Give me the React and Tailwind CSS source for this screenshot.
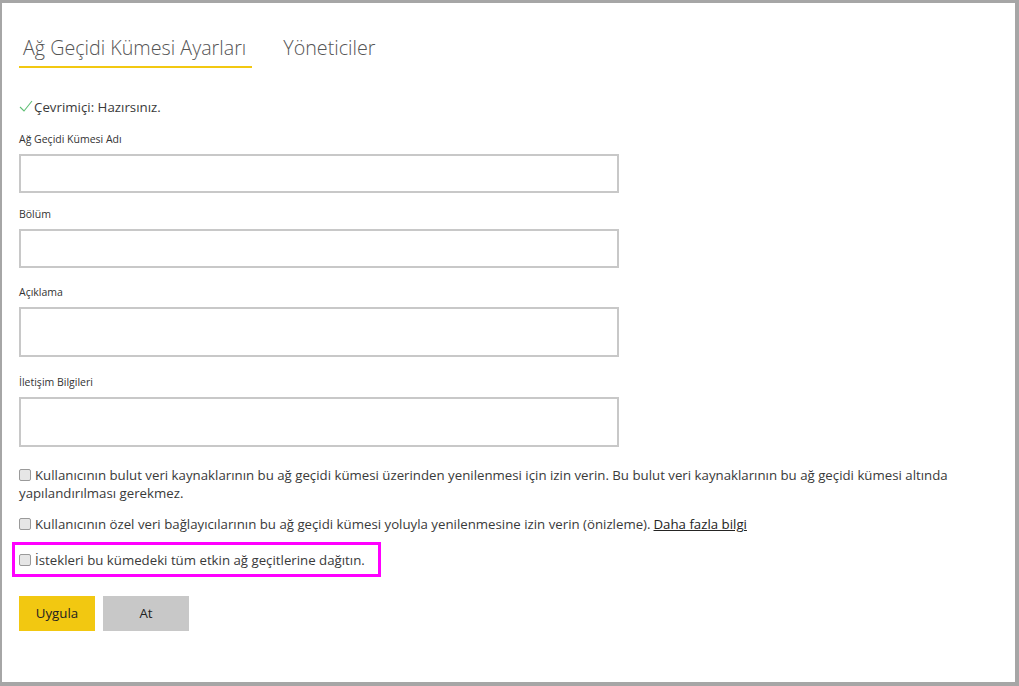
import { useState } from 'react';

const fields = [
  { label: 'Ağ Geçidi Kümesi Adı', h: 'h-[39px]', top: 'mt-[13px]' },
  { label: 'Bölüm', h: 'h-[39px]', top: 'mt-[13px]' },
  { label: 'Açıklama', h: 'h-[50px]', top: 'mt-[16px]' },
  { label: 'İletişim Bilgileri', h: 'h-[50px]', top: 'mt-[17px]' },
];

const Box = ({ checked, onChange }) => (
  <input
    type="checkbox"
    checked={checked}
    onChange={onChange}
    className="appearance-none w-[12px] h-[12px] shrink-0 rounded-[2px] border border-[#9a9a9a] bg-[#e6e6e6] mr-[4px] mt-[3px] checked:bg-[#f2c811]"
  />
);

const App = () => {
  const [tab, setTab] = useState(0);
  const [checks, setChecks] = useState([false, false, false]);

  const toggle = (i) => setChecks(checks.map((c, idx) => (idx === i ? !c : c)));

  return (
    <div
      className="w-[1019px] h-[686px] bg-white border-[#a6a6a6] border-l-2 border-t-[3px] border-r-4 border-b-4 pl-[17px] pt-[31px] text-[#333]"
      style={{ fontFamily: '"Open Sans", "Noto Sans", sans-serif' }}
    >
      {/* Tabs */}
      <div className="flex items-end">
        {['Ağ Geçidi Kümesi Ayarları', 'Yöneticiler'].map((t, i) => (
          <button
            key={t}
            onClick={() => setTab(i)}
            className={`text-[19.7px] font-light leading-[28px] pb-[4px] border-b-2 ${
              i === 0 ? 'pl-[4px] pr-[6px] mr-[31px]' : 'px-0'
            } ${tab === i ? 'border-[#f2c811]' : 'border-transparent'} text-[#555]`}
          >
            {t}
          </button>
        ))}
      </div>

      {/* Status */}
      <div className="flex items-center mt-[30px] h-[20px] text-[13.3px] text-[#3a3a3a]">
        <svg width="14" height="12" viewBox="0 0 14 12" className="mr-[1px] -mt-[4px]">
          <path d="M1 7 L5 11 L13 1" fill="none" stroke="#5fbf75" strokeWidth="1.1" />
        </svg>
        <span>Çevrimiçi: Hazırsınız.</span>
      </div>

      {/* Fields */}
      {fields.map((f) => (
        <div key={f.label} className={f.top}>
          <div className="text-[10.5px] leading-[16px] text-[#333] mb-[7px]">{f.label}</div>
          <input
            type="text"
            className={`block w-[600px] ${f.h} border-2 border-[#c8c8c8] outline-none px-2 text-[13px]`}
          />
        </div>
      ))}

      {/* Options */}
      <div className="mt-[19px] text-[13.25px] leading-[18px] text-[#3a3a3a] w-[960px]">
        <label className="flex items-start">
          <Box checked={checks[0]} onChange={() => toggle(0)} />
          <span>
            Kullanıcının bulut veri kaynaklarının bu ağ geçidi kümesi üzerinden yenilenmesi için izin verin. Bu bulut veri kaynaklarının bu ağ geçidi kümesi altında
          </span>
        </label>
        <div>yapılandırılması gerekmez.</div>

        <label className="flex items-start mt-[13px]">
          <Box checked={checks[1]} onChange={() => toggle(1)} />
          <span>
            Kullanıcının özel veri bağlayıcılarının bu ağ geçidi kümesi yoluyla yenilenmesine izin verin (önizleme).
            <a href="#" className="ml-[3px] underline text-[#252423]">Daha fazla bilgi</a>
          </span>
        </label>

        <div className="mt-[9px] -ml-[7px] w-[369px] h-[35px] border-[3px] border-[#ff00ff] pl-[4px] flex items-center">
          <label className="flex items-start">
            <Box checked={checks[2]} onChange={() => toggle(2)} />
            <span>İstekleri bu kümedeki tüm etkin ağ geçitlerine dağıtın.</span>
          </label>
        </div>
      </div>

      {/* Buttons */}
      <div className="flex gap-[8px] mt-[19px]">
        <button className="w-[76px] h-[35px] bg-[#f2c811] text-[13.3px] text-[#222]">Uygula</button>
        <button className="w-[86px] h-[35px] bg-[#c8c8c8] text-[13.3px] text-[#222]">At</button>
      </div>
    </div>
  );
};

export default App;
